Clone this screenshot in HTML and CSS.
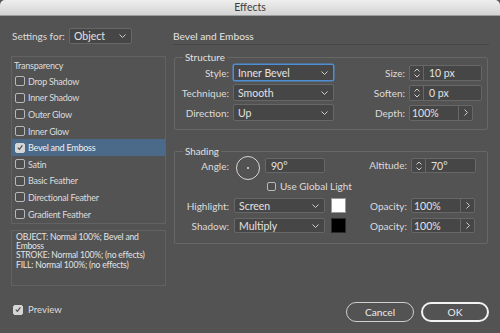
FILE: index.html
```html
<!DOCTYPE html>
<html>
<head>
<meta charset="utf-8">
<link rel="stylesheet" href="styles.css">
</head>
<body>
<div class="window">
  <div class="titlebar">Effects</div>
  <div class="main">
    <div class="left">
      <div class="settings">
        <span class="settings-label">Settings for:</span>
        <div class="select sel-object"><span>Object</span><svg class="chev" width="7" height="4" viewBox="0 0 7 4"><path d="M0.5 0.5 L3.5 3.5 L6.5 0.5" fill="none" stroke="#cfcfcf" stroke-width="1"/></svg></div>
      </div>
      <div class="list">
        <div class="list-head">Transparency</div>
        <div class="item"><span class="cb"></span>Drop Shadow</div>
        <div class="item"><span class="cb"></span>Inner Shadow</div>
        <div class="item"><span class="cb"></span>Outer Glow</div>
        <div class="item"><span class="cb"></span>Inner Glow</div>
        <div class="item selected"><span class="cb checked"><svg width="9" height="9" viewBox="0 0 9 9"><path d="M2 4.6 L3.8 6.5 L7.2 2" fill="none" stroke="#4a4a4a" stroke-width="1.3"/></svg></span>Bevel and Emboss</div>
        <div class="item"><span class="cb"></span>Satin</div>
        <div class="item"><span class="cb"></span>Basic Feather</div>
        <div class="item"><span class="cb"></span>Directional Feather</div>
        <div class="item"><span class="cb"></span>Gradient Feather</div>
      </div>
      <div class="info">
        <div class="info-line">OBJECT: Normal 100%; Bevel and</div>
        <div class="info-line">Emboss</div>
        <div class="info-line">STROKE: Normal 100%; (no effects)</div>
        <div class="info-line">FILL: Normal 100%; (no effects)</div>
      </div>
      <div class="preview"><span class="cb checked"><svg width="9" height="9" viewBox="0 0 9 9"><path d="M2 4.6 L3.8 6.5 L7.2 2" fill="none" stroke="#4a4a4a" stroke-width="1.3"/></svg></span>Preview</div>
    </div>
    <div class="right">
      <div class="header">Bevel and Emboss</div>
      <fieldset class="group structure">
        <legend>Structure</legend>
        <div class="row">
          <span class="lbl">Style:</span>
          <div class="select wide focus"><span>Inner Bevel</span><svg class="chev" width="7" height="4" viewBox="0 0 7 4"><path d="M0.5 0.5 L3.5 3.5 L6.5 0.5" fill="none" stroke="#cfcfcf" stroke-width="1"/></svg></div>
          <span class="lbl2">Size:</span>
          <div class="spin s-size"><span class="arrows"><svg width="6" height="10" viewBox="0 0 6 10"><path d="M0.5 3.5 L3 1 L5.5 3.5 M0.5 6.5 L3 9 L5.5 6.5" fill="none" stroke="#cfcfcf" stroke-width="1"/></svg></span><span class="val">10 px</span></div>
        </div>
        <div class="row">
          <span class="lbl">Technique:</span>
          <div class="select wide"><span>Smooth</span><svg class="chev" width="7" height="4" viewBox="0 0 7 4"><path d="M0.5 0.5 L3.5 3.5 L6.5 0.5" fill="none" stroke="#cfcfcf" stroke-width="1"/></svg></div>
          <span class="lbl2">Soften:</span>
          <div class="spin s-size"><span class="arrows"><svg width="6" height="10" viewBox="0 0 6 10"><path d="M0.5 3.5 L3 1 L5.5 3.5 M0.5 6.5 L3 9 L5.5 6.5" fill="none" stroke="#cfcfcf" stroke-width="1"/></svg></span><span class="val">0 px</span></div>
        </div>
        <div class="row">
          <span class="lbl">Direction:</span>
          <div class="select wide"><span>Up</span><svg class="chev" width="7" height="4" viewBox="0 0 7 4"><path d="M0.5 0.5 L3.5 3.5 L6.5 0.5" fill="none" stroke="#cfcfcf" stroke-width="1"/></svg></div>
          <span class="lbl2">Depth:</span>
          <div class="combo c-depth"><span class="val">100%</span><span class="more"><svg width="4" height="7" viewBox="0 0 4 7"><path d="M0.5 0.5 L3.5 3.5 L0.5 6.5" fill="none" stroke="#cfcfcf" stroke-width="1"/></svg></span></div>
        </div>
      </fieldset>
      <fieldset class="group shading">
        <legend>Shading</legend>
        <div class="angle-row">
          <span class="lbl a-lbl">Angle:</span>
          <div class="dial"><span class="dot"></span></div>
          <div class="angle-col">
            <div class="field f-angle">90°</div>
            <div class="global"><span class="cb"></span>Use Global Light</div>
          </div>
          <span class="lbl2 alt-lbl">Altitude:</span>
          <div class="spin s-alt"><span class="arrows"><svg width="6" height="10" viewBox="0 0 6 10"><path d="M0.5 3.5 L3 1 L5.5 3.5 M0.5 6.5 L3 9 L5.5 6.5" fill="none" stroke="#cfcfcf" stroke-width="1"/></svg></span><span class="val">70°</span></div>
        </div>
        <div class="row2 r-high">
          <span class="lbl">Highlight:</span>
          <div class="select mid"><span>Screen</span><svg class="chev" width="7" height="4" viewBox="0 0 7 4"><path d="M0.5 0.5 L3.5 3.5 L6.5 0.5" fill="none" stroke="#cfcfcf" stroke-width="1"/></svg></div>
          <span class="swatch white"></span>
          <span class="lbl2">Opacity:</span>
          <div class="combo c-op"><span class="val">100%</span><span class="more"><svg width="4" height="7" viewBox="0 0 4 7"><path d="M0.5 0.5 L3.5 3.5 L0.5 6.5" fill="none" stroke="#cfcfcf" stroke-width="1"/></svg></span></div>
        </div>
        <div class="row2 r-shadow">
          <span class="lbl">Shadow:</span>
          <div class="select mid"><span>Multiply</span><svg class="chev" width="7" height="4" viewBox="0 0 7 4"><path d="M0.5 0.5 L3.5 3.5 L6.5 0.5" fill="none" stroke="#cfcfcf" stroke-width="1"/></svg></div>
          <span class="swatch black"></span>
          <span class="lbl2">Opacity:</span>
          <div class="combo c-op"><span class="val">100%</span><span class="more"><svg width="4" height="7" viewBox="0 0 4 7"><path d="M0.5 0.5 L3.5 3.5 L0.5 6.5" fill="none" stroke="#cfcfcf" stroke-width="1"/></svg></span></div>
        </div>
      </fieldset>
      <div class="buttons">
        <button class="btn">Cancel</button>
        <button class="btn ok">OK</button>
      </div>
    </div>
  </div>
</div>
</body>
</html>
```
FILE: styles.css
```css
* { box-sizing: border-box; }
html, body { margin: 0; padding: 0; }
body {
  width: 500px;
  height: 333px;
  overflow: hidden;
  background: #535353;
  font-family: "Lato", "Liberation Sans", sans-serif;
  font-size: 10px;
  color: #dcdcdc;
}
.window { width: 500px; height: 333px; display: flex; flex-direction: column; }
.titlebar {
  height: 16px;
  background: linear-gradient(#efefef, #d3d3d3);
  border-bottom: 1px solid #9d9d9d;
  border-radius: 5px 5px 0 0;
  text-align: center;
  line-height: 15px;
  font-size: 10.5px;
  color: #3c3c3c;
}
.main { flex: 1; display: flex; padding: 0 11px 0 11px; }
.left { width: 155px; display: flex; flex-direction: column; }
.settings { margin-top: 12px; height: 16px; display: flex; align-items: center; }
.settings-label { width: 58px; padding-left: 1px; white-space: nowrap; }
.select {
  height: 16px;
  background: #464646;
  border: 1px solid #676767;
  border-radius: 2px;
  display: flex;
  align-items: center;
  justify-content: space-between;
  padding: 0 5px 0 4px;
  color: #e2e2e2;
  font-size: 10.5px;
}
.sel-object { width: 63px; }
.select.wide { width: 101px; height: 17px; }
.select.mid { width: 91px; height: 15px; }
.select.focus { border-color: #4e8fd4; box-shadow: 0 0 0 0.5px #4e8fd4; }
.list {
  margin-top: 12px;
  height: 168px;
  border: 1px solid #626262;
  padding-top: 1px;
  font-size: 9px;
  letter-spacing: -0.25px;
}
.list-head { height: 15px; line-height: 15px; padding-left: 2px; }
.item {
  height: 16.6px;
  display: flex;
  align-items: center;
  padding-left: 3px;
}
.item.selected { background: #4b6a8a; color: #f0f0f0; }
.cb {
  width: 10px;
  height: 10px;
  border: 1px solid #b8b8b8;
  border-radius: 2px;
  background: #4e4e4e;
  margin-right: 3px;
  display: inline-flex;
  align-items: center;
  justify-content: center;
  flex: none;
}
.cb.checked { background: #d6d6d6; border-color: #d6d6d6; }
.cb svg { display: block; }
.info {
  margin-top: 6px;
  height: 56px;
  border: 1px solid #626262;
  padding: 2px 4px 0 4px;
  font-size: 8.6px;
  letter-spacing: -0.2px;
  color: #e4e4e4;
}
.info-line { height: 9.2px; line-height: 9.2px; white-space: nowrap; }
.preview {
  margin-top: 18px;
  display: flex;
  align-items: center;
  padding-left: 2px;
  font-size: 9.6px;
}
.preview .cb { margin-right: 5px; }
.right { width: 316px; margin-left: 7px; display: flex; flex-direction: column; }
.header {
  margin-top: 12px;
  height: 17px;
  line-height: 16px;
  border-bottom: 1px solid #464646;
  font-size: 10.2px;
  color: #e4e4e4;
}
.group {
  margin: 0 1px 0 1px;
  padding: 0 5px 0 0;
  border: 1px solid #676767;
  border-radius: 2px;
  min-width: 0;
}
.group legend {
  margin-left: 8px;
  padding: 0 2px;
  height: 14px;
  line-height: 14px;
  font-size: 9.8px;
  color: #e2e2e2;
}
.structure { margin-top: 5px; padding-bottom: 8px; }
.row { display: flex; align-items: center; height: 17px; margin-bottom: 3px; }
.row:last-of-type { margin-bottom: 0; }
.lbl { width: 54px; text-align: right; margin-right: 4px; flex: none; white-space: nowrap; }
.lbl2 { flex: 1; text-align: right; margin-right: 4px; white-space: nowrap; }
.spin, .combo, .field {
  height: 16px;
  background: #464646;
  border: 1px solid #676767;
  border-radius: 2px;
  display: flex;
  align-items: center;
  color: #e2e2e2;
  font-size: 10.5px;
}
.s-size { width: 73px; }
.arrows {
  width: 14px;
  height: 100%;
  border-right: 1px solid #676767;
  display: flex;
  align-items: center;
  justify-content: center;
}
.arrows svg { display: block; }
.spin .val { padding-left: 5px; }
.combo .val { flex: 1; padding-left: 2px; }
.more {
  width: 14px;
  height: 100%;
  border-left: 1px solid #676767;
  display: flex;
  align-items: center;
  justify-content: center;
}
.c-depth { width: 64px; margin-right: 9px; }
.shading { margin-top: 14px; padding-bottom: 10px; padding-right: 12px; }
.angle-row { display: flex; align-items: flex-start; }
.a-lbl { line-height: 15px; margin-top: 1px; }
.dial {
  width: 24px;
  height: 24px;
  border: 1.5px solid #d8d8d8;
  border-radius: 50%;
  margin-left: 3px;
  margin-top: -2px;
  display: flex;
  align-items: center;
  justify-content: center;
}
.dot { width: 2px; height: 2px; background: #e0e0e0; border-radius: 1px; }
.angle-col { margin-left: 5px; display: flex; flex-direction: column; }
.f-angle { width: 60px; height: 15px; padding-left: 5px; }
.global { margin-top: 8px; display: flex; align-items: center; margin-left: 2px; height: 10px; font-size: 10px; }
.global .cb { width: 9px; height: 9px; margin-right: 4px; }
.alt-lbl { line-height: 15px; }
.s-alt { width: 65px; height: 15px; margin-right: -1px; }
.row2 { display: flex; align-items: center; height: 15px; }
.r-high { margin-top: 7px; }
.r-shadow { margin-top: 5px; }
.row2 .lbl { margin-right: 5px; }
.swatch { width: 15px; height: 15px; margin-left: 6px; flex: none; }
.swatch.white { background: #fff; border: 1px solid #999; }
.swatch.black { background: #000; border: 1px solid #2a2a2a; }
.c-op { width: 64px; height: 15px; }
.buttons { margin-top: auto; margin-bottom: 11px; display: flex; justify-content: flex-end; gap: 7px; }
.btn {
  width: 68px;
  height: 20px;
  border-radius: 10px;
  background: #535353;
  border: 1.5px solid #cfcfcf;
  color: #ececec;
  font-family: "Lato", "Liberation Sans", sans-serif;
  font-size: 10.2px;
  padding: 0;
}
.btn.ok { border: 2px solid #f2f2f2; }
```
